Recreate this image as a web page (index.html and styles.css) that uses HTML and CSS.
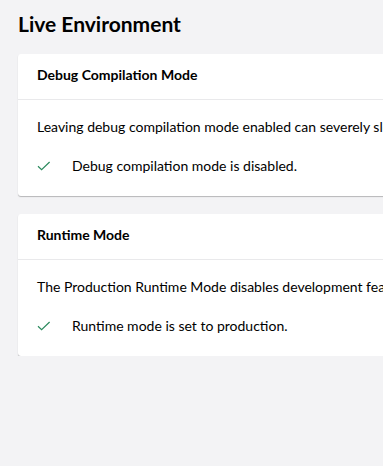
FILE: index.html
```html
<!DOCTYPE html>
<html>
<head>
<meta charset="utf-8">
<link rel="stylesheet" href="styles.css">
</head>
<body>
<main class="page">
  <h1 class="title">Live Environment</h1>
  <div class="cards">
    <section class="card">
      <header class="card-head">Debug Compilation Mode</header>
      <div class="card-body">
        <p class="desc">Leaving debug compilation mode enabled can severely slow down a website and take up more memory on the server.</p>
        <div class="result">
          <svg class="check" width="14" height="10" viewBox="0 0 14 10"><path d="M1 5.2 L4.6 8.6 L12.6 1" fill="none" stroke="#2b8a5e" stroke-width="1.2"/></svg>
          <span>Debug compilation mode is disabled.</span>
        </div>
      </div>
    </section>
    <section class="card">
      <header class="card-head">Runtime Mode</header>
      <div class="card-body">
        <p class="desc">The Production Runtime Mode disables development features and checks that settings are configured optimally for production.</p>
        <div class="result">
          <svg class="check" width="14" height="10" viewBox="0 0 14 10"><path d="M1 5.2 L4.6 8.6 L12.6 1" fill="none" stroke="#2b8a5e" stroke-width="1.2"/></svg>
          <span>Runtime mode is set to production.</span>
        </div>
      </div>
    </section>
  </div>
</main>
</body>
</html>
```

FILE: styles.css
```css
html, body {
  margin: 0;
  padding: 0;
  overflow: hidden;
  background: #f3f3f5;
}
body {
  font-family: Lato, "Open Sans", sans-serif;
  color: #000;
}
.page {
  width: 900px;
  padding: 11px 0 0 18px;
}
.title {
  margin: 0 0 17px;
  font-size: 21px;
  font-weight: 700;
  line-height: 26px;
  color: #000;
}
.cards {
  display: flex;
  flex-direction: column;
  gap: 18px;
}
.card {
  background: #fff;
  border-radius: 3px;
  box-shadow: 0 1px 1px rgba(0,0,0,0.25);
}
.card-head {
  height: 46px;
  box-sizing: border-box;
  padding: 11px 19px 0;
  font-size: 14px;
  font-weight: 700;
  line-height: 20px;
  border-bottom: 1px solid #e9e9eb;
}
.card-body {
  padding: 17px 19px 20px;
}
.desc {
  margin: 0;
  font-size: 14px;
  line-height: 20px;
  white-space: nowrap;
}
.result {
  margin-top: 19px;
  display: flex;
  align-items: center;
  gap: 21px;
  font-size: 14px;
  line-height: 20px;
}
.check {
  flex: none;
}
```
